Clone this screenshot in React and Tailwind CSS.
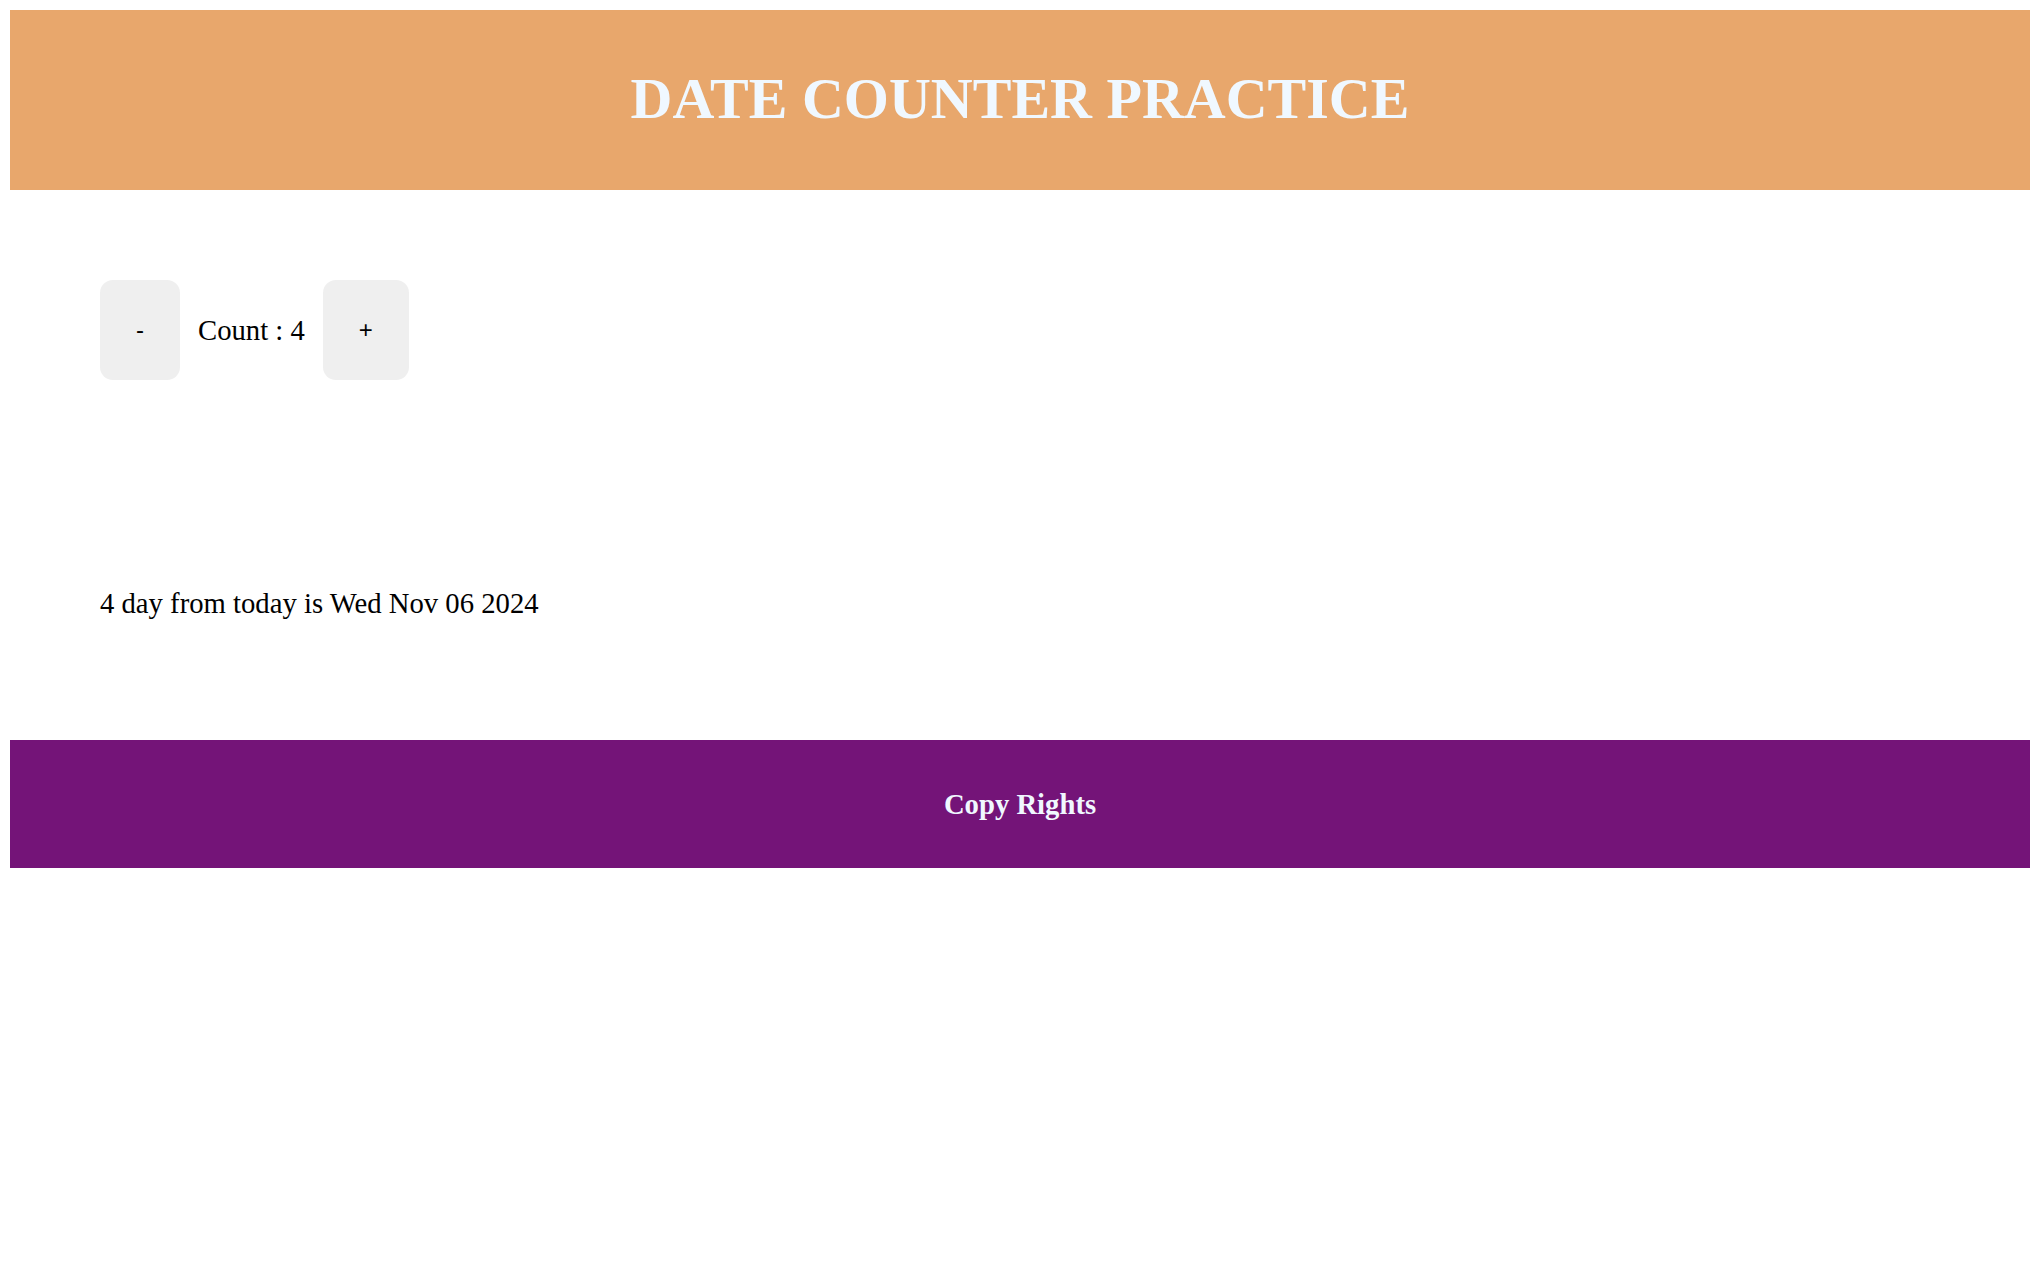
import { useState } from "react";

const serif = "font-['Liberation_Serif','Times_New_Roman',serif]";

export default function App() {
  const [count, setCount] = useState(4);

  const date = new Date(2024, 10, 2);
  date.setDate(date.getDate() + count);

  return (
    <div className={`min-h-screen bg-white pt-[10px] pl-[10px] text-black ${serif}`}>
      <div className="w-[2020px]">
        {/* Header */}
        <header className="h-[180px] bg-[#e8a76c] flex items-center justify-center pb-[2px]">
          <h1 className="text-[58px] font-bold leading-none text-[#f0f8ff]">DATE COUNTER PRACTICE</h1>
        </header>

        {/* Counter */}
        <main className="px-[90px] pt-[90px]">
          <div className="flex items-center gap-[18px]">
            <button
              onClick={() => setCount((c) => c - 1)}
              className="bg-[#efefef] rounded-[13px] px-[36px] py-[36px] text-[24px] leading-[28px] font-['Liberation_Sans',Arial,sans-serif]"
            >
              -
            </button>
            <span className="text-[28.7px] leading-[32px]">Count : {count}</span>
            <button
              onClick={() => setCount((c) => c + 1)}
              className="bg-[#efefef] rounded-[13px] px-[36px] py-[36px] text-[24px] leading-[28px] font-['Liberation_Sans',Arial,sans-serif]"
            >
              +
            </button>
          </div>

          <p className="mt-[207px] text-[28.7px] leading-[32px]">
            {count} day from today is {date.toDateString()}
          </p>
        </main>

        {/* Footer */}
        <footer className="mt-[121px] h-[128px] bg-[#741478] flex items-center justify-center">
          <h3 className="text-[28.7px] font-bold leading-none text-[#f0f8ff]">Copy Rights</h3>
        </footer>
      </div>
    </div>
  );
}
